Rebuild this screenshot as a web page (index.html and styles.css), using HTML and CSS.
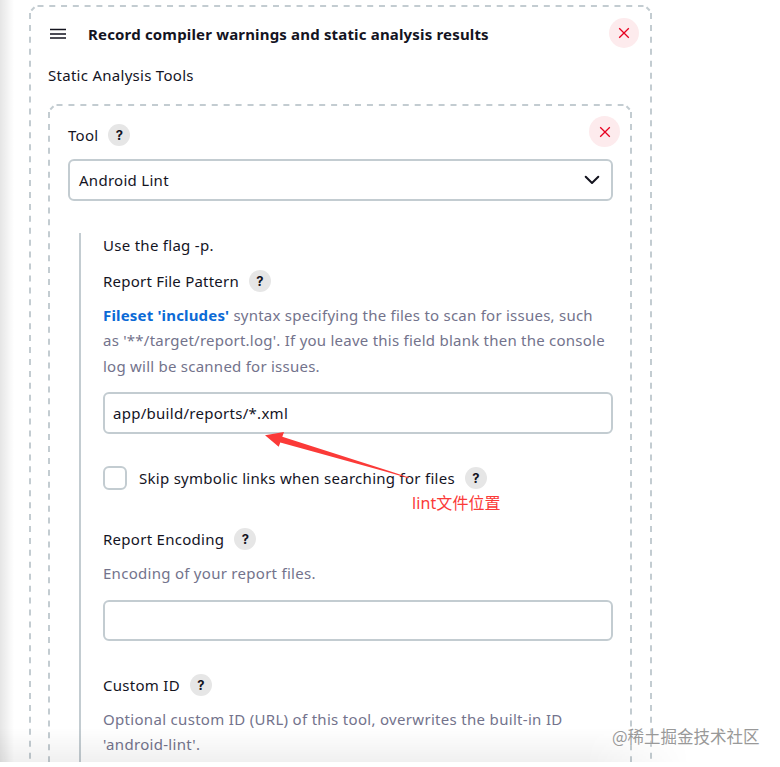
FILE: index.html
```
<!DOCTYPE html>
<html lang="en">
<head>
    <meta charset="UTF-8">
    <title>Static Analysis Config</title>
    <link rel="stylesheet" href="styles.css">
</head>
<body>
    <div class="page">
        <div class="chunk outer">
            <svg class="frame" width="623" height="760" viewBox="0 0 623 760">
                <path d="M8.5 1H614.5" stroke-dasharray="6 5.775"/>
                <path d="M1 8V760M622 8V760" stroke-dasharray="6 5.93"/>
                <path d="M2.3 5.5L5.5 2.3M617.5 2.3L620.7 5.5"/>
            </svg>
            <div class="chunk-header">
                <svg class="drag-handle" width="18" height="12" viewBox="0 0 18 12">
                    <path d="M1 1.5h16M1 10h16" stroke="#14141f" stroke-width="1.4"/>
                    <path d="M1 6h16" stroke="#4b4b55" stroke-width="2"/>
                </svg>
                <b class="title">Record compiler warnings and static analysis results</b>
                <button class="delete" type="button" aria-label="Delete">
                    <svg width="12" height="12" viewBox="0 0 12 12"><path d="M1.2 1.2l9.6 9.6M10.8 1.2l-9.6 9.6" stroke="#e6001f" stroke-width="1.3"/></svg>
                </button>
            </div>
            <div class="section-label">Static Analysis Tools</div>

            <div class="chunk inner">
                <svg class="frame" width="584" height="660" viewBox="0 0 584 660">
                    <path d="M8.5 1H575.5" stroke-dasharray="6 5.94"/>
                    <path d="M1 8V660M583 8V660" stroke-dasharray="6 5.93"/>
                    <path d="M2.3 5.5L5.5 2.3M578.5 2.3L581.7 5.5"/>
                </svg>
                <div class="tool-header">
                    <span class="tool-label">Tool</span>
                    <span class="help">?</span>
                    <button class="delete big" type="button" aria-label="Delete">
                        <svg width="12" height="12" viewBox="0 0 12 12"><path d="M1.2 1.2l9.6 9.6M10.8 1.2l-9.6 9.6" stroke="#e6001f" stroke-width="1.3"/></svg>
                    </button>
                </div>
                <div class="select">
                    <span>Android Lint</span>
                    <svg width="16" height="10" viewBox="0 0 16 10"><path d="M1.7 1.7L8 8l6.3-6.3" fill="none" stroke="#14141f" stroke-width="2" stroke-linecap="round" stroke-linejoin="round"/></svg>
                </div>

                <div class="tool-config">
                    <div class="label">Use the flag -p.</div>
                    <div class="label pattern">Report File Pattern<span class="help">?</span></div>
                    <div class="description pattern-desc"><a href="#">Fileset 'includes'</a> syntax specifying the files to scan for issues, such<br>as '**/target/report.log'. If you leave this field blank then the console<br>log will be scanned for issues.</div>
                    <input class="text-input" type="text" value="app/build/reports/*.xml">

                    <div class="check-row">
                        <span class="checkbox"></span>
                        <span>Skip symbolic links when searching for files</span>
                        <span class="help">?</span>
                    </div>

                    <div class="label encoding">Report Encoding<span class="help">?</span></div>
                    <div class="description">Encoding of your report files.</div>
                    <input class="text-input short" type="text">

                    <div class="label custom">Custom ID<span class="help">?</span></div>
                    <div class="description custom-desc">Optional custom ID (URL) of this tool, overwrites the built-in ID<br>'android-lint'.</div>
                </div>
            </div>
        </div>
        <div class="left-shadow"></div>
        <div class="bottom-shadow"></div>
    </div>

    <!-- annotations -->
    <svg class="arrow" width="150" height="54" viewBox="0 0 150 54">
        <path d="M5 5.3L24 2L22.3 6.7L130 41.2L149 47.6L148.5 48.2L129 42.6L20.3 12.6L18.7 16.8Z" fill="#fb3a38"/>
    </svg>
    <div class="note">lint文件位置</div>
    <div class="watermark">@稀土掘金技术社区</div>
</body>
</html>
```

FILE: styles.css
```
* {
    box-sizing: border-box;
}

body {
    margin: 0;
    height: 767px;
    overflow: hidden;
    background-color: #fff;
    color: #14141f;
    font-family: "Noto Sans", "Noto Sans CJK SC", sans-serif;
    font-size: 15px;
    letter-spacing: 0.28px;
    line-height: 24px;
    white-space: nowrap;
}

.page {
    position: relative;
    height: 762px;
    padding: 5px 0 0 29px;
    overflow: hidden;
}

.chunk {
    position: relative;
    border: 2px solid transparent;
}

/* dashed border, longer dashes than border-style gives */
.frame {
    position: absolute;
    top: -2px;
    left: -2px;
    fill: none;
    stroke: #c3ccd1;
    stroke-width: 2;
}

.outer {
    width: 623px;
    height: 900px;
    padding: 11px 18px 0 17px;
}

.chunk-header {
    display: flex;
    align-items: center;
    height: 30px;
    margin-right: -7px;
}

.drag-handle {
    margin: 2px 21px 0 1px;
}

.title {
    padding-top: 1px;
    letter-spacing: 0.17px;
}

.delete {
    display: flex;
    align-items: center;
    justify-content: center;
    width: 30px;
    height: 30px;
    margin-left: auto;
    padding: 0;
    border: none;
    border-radius: 50%;
    background-color: #fdebed;
}

.delete.big {
    width: 31px;
    height: 31px;
}

.section-label {
    margin: 15px 0 17px;
    height: 24px;
}

.inner {
    width: 584px;
    height: 900px;
    padding: 10px 17px 0 18px;
}

.tool-header {
    display: flex;
    align-items: center;
    height: 31px;
    margin-right: -7px;
}

.tool-label {
    padding-top: 7px;
}

.help {
    display: flex;
    align-items: center;
    justify-content: center;
    width: 22px;
    height: 22px;
    margin-left: 10px;
    border-radius: 50%;
    background-color: #e6e6e6;
    font-family: Inter, sans-serif;
    font-size: 13px;
    font-weight: 700;
    letter-spacing: 0;
    line-height: 22px;
}

.tool-header .help {
    margin-top: 6px;
}

.select {
    display: flex;
    align-items: center;
    justify-content: space-between;
    height: 42px;
    margin-top: 12px;
    padding: 0 11px 0 9px;
    border: 2px solid #c3ccd1;
    border-radius: 6px;
}

.tool-config {
    height: 700px;
    margin: 32px 0 0 11px;
    padding-left: 22px;
    border-left: 2px solid #c3ccd1;
}

.label {
    display: flex;
    align-items: center;
    height: 24px;
}

.pattern {
    margin-top: 12px;
    letter-spacing: 0.22px;
}

.description {
    margin-top: 10px;
    line-height: 25.4px;
    color: #73738c;
}

.pattern-desc {
    height: 76.5px;
    letter-spacing: 0.24px;
}

.description a {
    color: #0b6ad6;
    font-weight: 700;
    letter-spacing: 0.17px;
    text-decoration: none;
}

.custom-desc {
    letter-spacing: 0.31px;
    line-height: 25px;
}

.text-input {
    display: block;
    width: 100%;
    height: 42px;
    margin: 12.5px 0 0;
    padding: 0 8px;
    border: 2px solid #c3ccd1;
    border-radius: 6px;
    background-color: #fff;
    color: #14141f;
    font: inherit;
    letter-spacing: inherit;
    outline: none;
}

.check-row {
    display: flex;
    align-items: center;
    height: 24px;
    margin-top: 32px;
}

.checkbox {
    width: 24px;
    height: 24px;
    margin-right: 12px;
    border: 2px solid #c3ccd1;
    border-radius: 6px;
}

.encoding {
    margin-top: 37px;
}

.text-input.short {
    height: 41px;
    margin-top: 13.6px;
}

.custom {
    margin-top: 32px;
}

.left-shadow {
    position: absolute;
    top: 0;
    left: 0;
    width: 14px;
    height: 100%;
    background: linear-gradient(to right, rgba(0, 0, 0, 0.1), rgba(0, 0, 0, 0));
}

.bottom-shadow {
    position: absolute;
    bottom: 0;
    left: 0;
    width: 690px;
    height: 34px;
    background: linear-gradient(to bottom, rgba(0, 0, 0, 0), rgba(0, 0, 0, 0.06));
    -webkit-mask-image: linear-gradient(to right, #000 85%, transparent);
    mask-image: linear-gradient(to right, #000 85%, transparent);
}

.arrow {
    position: absolute;
    top: 430px;
    left: 260px;
}

.note {
    position: absolute;
    top: 491px;
    left: 412px;
    color: #fb3a38;
    font-size: 16px;
    letter-spacing: 0.1px;
}

.watermark {
    position: absolute;
    top: 724px;
    left: 612px;
    color: #999;
    font-family: "Noto Sans CJK SC", sans-serif;
    font-size: 16.5px;
    letter-spacing: 0;
    text-shadow: 0 0 2px #fff;
}
```
